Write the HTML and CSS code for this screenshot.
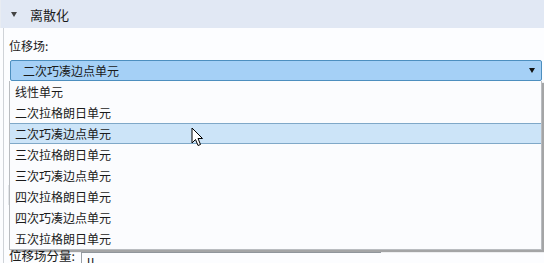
FILE: index.html
```html
<!DOCTYPE html>
<html>
<head>
<meta charset="utf-8">
<link rel="stylesheet" href="styles.css">
</head>
<body>
<div class="panel">
  <div class="header">
    <span class="caret"></span>
    <span class="title">离散化</span>
  </div>
  <div class="content">
    <div class="label">位移场:</div>
    <div class="select">
      <span class="select-text">二次巧凑边点单元</span>
      <span class="select-arrow"></span>
    </div>
    <div class="hidden-area">
      <div class="hidden-bar"></div>
    </div>
    <div class="row">
      <span class="row-label">位移场分量:</span>
      <div class="input">u</div>
    </div>
  </div>
  <ul class="dropdown">
    <li class="item">线性单元</li>
    <li class="item">二次拉格朗日单元</li>
    <li class="item selected">二次巧凑边点单元</li>
    <li class="item">三次拉格朗日单元</li>
    <li class="item">三次巧凑边点单元</li>
    <li class="item">四次拉格朗日单元</li>
    <li class="item">四次巧凑边点单元</li>
    <li class="item">五次拉格朗日单元</li>
  </ul>
  <svg class="cursor" width="13" height="21" viewBox="0 0 13 21">
    <path d="M1 1 L1 16 L4.5 12.5 L7 18.5 L9.5 17.5 L7 11.5 L11.5 11.5 Z" fill="#fff" stroke="#000" stroke-width="1" stroke-linejoin="miter"/>
  </svg>
</div>
</body>
</html>
```

FILE: styles.css
```css
* { box-sizing: border-box; }
html, body {
  margin: 0;
  padding: 0;
  background: #fcfdff;
  width: 544px;
  height: 263px;
  overflow: hidden;
  font-family: "Noto Sans CJK SC", "Noto Sans", sans-serif;
  font-size: 12px;
  color: #1a1a1a;
}
.panel {
  position: relative;
  width: 544px;
  height: 263px;
}
.header {
  height: 28px;
  background: #e1e8f4;
  display: flex;
  align-items: center;
  padding-left: 10px;
  border-left: 1px solid #e8ecf2;
}
.caret {
  width: 0;
  height: 0;
  border-left: 3.5px solid transparent;
  border-right: 3.5px solid transparent;
  border-top: 5px solid #444;
  margin-top: 1px;
}
.title {
  margin-left: 13px;
  font-size: 13px;
  color: #1a1a1a;
}
.content {
  margin-left: 3px;
  border-left: 1px solid #cfd3d8;
  height: 235px;
  padding-left: 5px;
  display: flex;
  flex-direction: column;
}
.label {
  margin-top: 9px;
  height: 18px;
  line-height: 18px;
}
.select {
  margin-top: 5px;
  margin-left: 1px;
  width: 532px;
  height: 21px;
  background: #a5d0f6;
  border: 1px solid #4d8fbf;
  border-radius: 2px;
  display: flex;
  align-items: center;
  justify-content: space-between;
  padding-left: 12px;
  padding-right: 6px;
}
.select-text { line-height: 19px; }
.select-arrow {
  width: 0;
  height: 0;
  border-left: 3.5px solid transparent;
  border-right: 3.5px solid transparent;
  border-top: 5px solid #111;
}
.hidden-area {
  height: 170px;
  display: flex;
  flex-direction: column;
  padding-top: 104px;
}
.hidden-bar {
  height: 20px;
  width: 8px;
  margin-left: -1px;
  background: #e3e6ea;
}
.row {
  display: flex;
  align-items: flex-start;
  height: 14px;
  overflow: visible;
}
.row-label {
  line-height: 16px;
  font-size: 12.5px;
  margin-top: -1px;
}
.input {
  margin-left: 6px;
  margin-top: 3px;
  width: 300px;
  height: 20px;
  border-left: 1px solid #9aa0a6;
  border-top: 1px solid #9aa0a6;
  padding-left: 5px;
  line-height: 14px;
}
.dropdown {
  position: absolute;
  left: 9px;
  top: 81px;
  width: 533px;
  margin: 0;
  padding: 0;
  list-style: none;
  background: #fbfcfe;
  border: 1px solid #b9bcc0;
  border-top: none;
  box-shadow: 2px 2px 1px rgba(0,0,0,0.35);
}
.item {
  height: 21px;
  line-height: 21px;
  padding-left: 5px;
}
.item.selected {
  background: #cce4f8;
  border-top: 1px solid #7fa8c8;
  border-bottom: 1px solid #7fa8c8;
  line-height: 19px;
}
.cursor {
  position: absolute;
  left: 191px;
  top: 127px;
}
```
